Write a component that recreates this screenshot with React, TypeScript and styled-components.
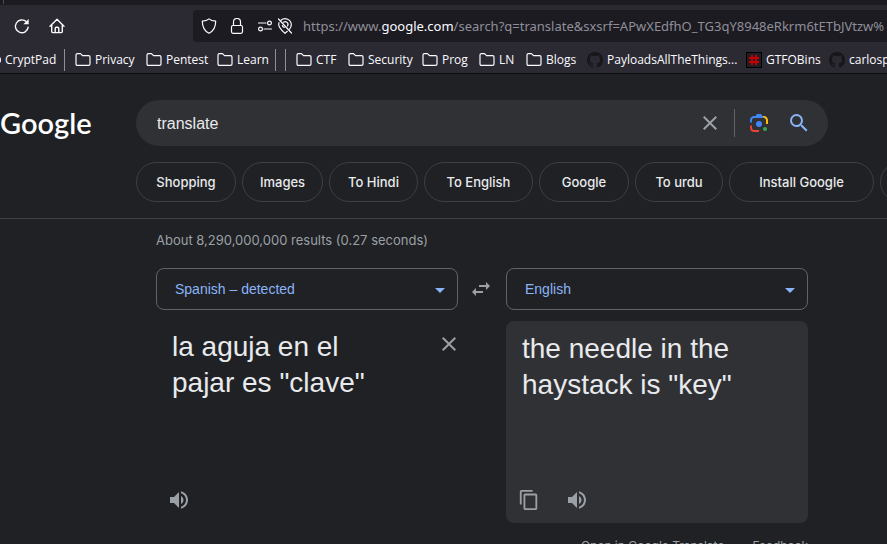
import React, { useState } from "react";
import styled, { createGlobalStyle } from "styled-components";

const GlobalStyle = createGlobalStyle`
  *, *::before, *::after { box-sizing: border-box; }
  html, body { margin: 0; height: 100%; overflow: hidden; background: #202124; }
  body { font-family: "Liberation Sans", Arial, sans-serif; color: #e8eaed; }
  #root { height: 100%; }
  button, input, select, textarea { font: inherit; color: inherit; margin: 0; }
`;

const uiFont = `"Open Sans", "Noto Sans", sans-serif`;
const brandFont = `Inter, Roboto, sans-serif`;

const Window = styled.div`
  height: 100%;
  display: flex;
  flex-direction: column;
  overflow: hidden;
`;

const TabEdge = styled.div`
  height: 5px;
  flex: none;
  background: #1c1b22;
  padding-left: 3px;
  &::before {
    content: "";
    display: block;
    width: 1px;
    height: 4px;
    background: #4a4953;
  }
`;

const Toolbar = styled.div`
  flex: none;
  height: 41px;
  display: flex;
  align-items: center;
  background: #2b2a33;
  padding: 0 0 0 12px;
`;

const IconButton = styled.button`
  flex: none;
  display: inline-flex;
  align-items: center;
  justify-content: center;
  padding: 0;
  border: 0;
  background: none;
  color: inherit;
  cursor: pointer;
  svg { display: block; }
`;

const NavButtons = styled.div`
  display: flex;
  gap: 15px;
  width: 181px;
  flex: none;
  color: #fbfbfe;
`;

const UrlBar = styled.div`
  flex: 1;
  min-width: 0;
  height: 32px;
  display: flex;
  align-items: center;
  background: #1c1b22;
  border-radius: 4px 0 0 4px;
  padding-left: 8px;
  overflow: hidden;
  color: #fbfbfe;
`;

const SiteIcons = styled.div`
  display: flex;
  align-items: center;
  flex: none;
  width: 102px;
  gap: 12px;
`;

const IconPair = styled.div`
  display: flex;
  gap: 4px;
`;

const Url = styled.div`
  font: 13px/20px "Noto Sans", sans-serif;
  white-space: nowrap;
  color: #8f8f98;
  b { font-weight: 400; color: #fbfbfe; }
`;

const Bookmarks = styled.nav`
  flex: none;
  height: 28px;
  display: flex;
  align-items: center;
  gap: 13px;
  background: #2b2a33;
  border-bottom: 1px solid #0c0c0d;
  overflow: hidden;
  font: 12px/16px ${uiFont};
  color: #fbfbfe;
`;

const Bookmark = styled.a<{ $width: number }>`
  flex: none;
  width: ${(p) => p.$width}px;
  display: flex;
  align-items: center;
  gap: 4px;
  color: inherit;
  text-decoration: none;
  white-space: nowrap;
  svg { flex: none; display: block; }
`;

const Rule = styled.span<{ $tight?: boolean }>`
  flex: none;
  width: 1px;
  height: 22px;
  background: #8f8f98;
  margin: 0 -3px 0 ${(p) => (p.$tight ? -1 : -3)}px;
`;

const Header = styled.header`
  flex: none;
  display: grid;
  grid-template-columns: 136px minmax(0, 1fr);
  padding-top: 26px;
  height: 145px;
  border-bottom: 1px solid #3c4043;
`;

const Logo = styled.a`
  height: 46px;
  font: 600 29px/46px Lato, sans-serif;
  color: #fff;
  text-decoration: none;
`;

const SearchArea = styled.div`
  min-width: 0;
  display: flex;
  flex-direction: column;
  gap: 16px;
`;

const SearchBox = styled.form`
  height: 46px;
  width: 100%;
  max-width: 692px;
  display: flex;
  align-items: center;
  background: #303134;
  border-radius: 23px;
  padding: 0 17px 0 21px;
`;

const SearchInput = styled.input`
  flex: 1;
  min-width: 0;
  height: 34px;
  padding: 2px 0 0;
  border: 0;
  outline: 0;
  background: none;
  font-size: 16px;
  color: #e8eaed;
`;

const SearchTools = styled.div`
  display: flex;
  align-items: center;
  color: #9aa0a6;
`;

const ToolDivider = styled.span`
  width: 1px;
  height: 28px;
  background: #5f6368;
  margin: 0 12px;
`;

const SubmitButton = styled(IconButton)`
  color: #8ab4f8;
  margin-left: 16px;
`;

const Chips = styled.nav`
  display: flex;
  gap: 6px;
  overflow: hidden;
`;

const Chip = styled.a<{ $width: number }>`
  flex: none;
  width: ${(p) => p.$width}px;
  height: 40px;
  display: flex;
  align-items: center;
  justify-content: center;
  border: 1px solid #3c4043;
  border-radius: 20px;
  font: 500 13px/20px ${brandFont};
  color: #e8eaed;
  text-decoration: none;
  white-space: nowrap;
`;

const Results = styled.main`
  flex: none;
  width: 100%;
  max-width: 808px;
  padding-left: 156px;
`;

const Stats = styled.div`
  padding: 11px 0 17px;
  font: 13px/21px ${brandFont};
  color: #9aa0a6;
`;

const Translator = styled.section`
  display: grid;
  grid-template-columns: minmax(0, 1fr) 48px minmax(0, 1fr);
`;

const LanguageField = styled.label`
  display: grid;
  align-items: center;
  color: #8ab4f8;
  svg {
    grid-area: 1 / 1;
    justify-self: end;
    margin: 2px 6px 0 0;
    pointer-events: none;
  }
`;

const LanguageSelect = styled.select`
  grid-area: 1 / 1;
  width: 100%;
  height: 42px;
  appearance: none;
  padding: 0 40px 0 18px;
  border: 1px solid #5f6368;
  border-radius: 8px;
  background: #202124;
  color: #8ab4f8;
  font-size: 14px;
`;

const SwapButton = styled(IconButton)`
  color: #9aa0a6;
  padding-right: 2px;
`;

const Pane = styled.div<{ $filled?: boolean }>`
  grid-column: ${(p) => (p.$filled ? 3 : 1)};
  margin-top: 11px;
  height: 202px;
  display: flex;
  flex-direction: column;
  justify-content: space-between;
  border-radius: 8px;
  padding: ${(p) => (p.$filled ? "10px 12px 11px" : "8px 0 11px 11px")};
  background: ${(p) => (p.$filled ? "#303134" : "transparent")};
  color: #9aa0a6;
`;

const SourceRow = styled.div`
  display: flex;
  align-items: flex-start;
  justify-content: space-between;
  padding-left: 5px;
`;

const SourceText = styled.textarea`
  width: 220px;
  height: 80px;
  padding: 0;
  border: 0;
  outline: 0;
  resize: none;
  overflow: hidden;
  background: none;
  color: #e8eaed;
  font-size: 28px;
  line-height: 36px;
`;

const ClearSource = styled(IconButton)`
  margin: 3px -3px 0 0;
`;

const TargetText = styled.p`
  margin: 0;
  padding-left: 4px;
  max-width: 240px;
  color: #e8eaed;
  font-size: 28px;
  line-height: 36px;
`;

const Actions = styled.div`
  display: flex;
  align-items: center;
  gap: 25px;
`;

const Footer = styled.footer`
  display: flex;
  justify-content: flex-end;
  gap: 28px;
  padding-top: 15px;
  font: 12px/16px ${brandFont};
  a { color: #9aa0a6; text-decoration: none; }
`;

const Glyph = ({ d, size = 24 }: { d: string; size?: number }) => (
  <svg width={size} height={size} viewBox="0 0 24 24" fill="currentColor" aria-hidden="true">
    <path d={d} />
  </svg>
);

const CLOSE = "M19 6.41L17.59 5 12 10.59 6.41 5 5 6.41 10.59 12 5 17.59 6.41 19 12 13.41 17.59 19 19 17.59 13.41 12z";
const SEARCH = "M15.5 14h-.79l-.28-.27A6.471 6.471 0 0 0 16 9.5 6.5 6.5 0 1 0 9.5 16c1.61 0 3.09-.59 4.23-1.57l.27.28v.79l5 4.99L20.49 19l-4.99-5zm-6 0C7.01 14 5 11.99 5 9.5S7.01 5 9.5 5 14 7.01 14 9.5 11.99 14 9.5 14z";
const SPEAKER = "M3 9v6h4l5 5V4L7 9H3zm13.5 3c0-1.77-1.02-3.29-2.5-4.03v8.05c1.48-.73 2.5-2.25 2.5-4.02zM14 3.23v2.06c2.89.86 5 3.54 5 6.71s-2.11 5.85-5 6.71v2.06c4.01-.91 7-4.49 7-8.77s-2.99-7.86-7-8.77z";
const COPY = "M16 1H4c-1.1 0-2 .9-2 2v14h2V3h12V1zm3 4H8c-1.1 0-2 .9-2 2v14c0 1.1.9 2 2 2h11c1.1 0 2-.9 2-2V7c0-1.1-.9-2-2-2zm0 16H8V7h11v14z";
const SWAP = "M6.99 11L3 15l3.99 4v-3H14v-2H6.99v-3zM21 9l-3.99-4v3H10v2h7.01v3L21 9z";
const CARET = "M7 10l5 5 5-5z";

const Line = ({ children, width = 16 }: { children: React.ReactNode; width?: number }) => (
  <svg width={width} height="16" viewBox={`0 0 ${width} 16`} fill="none" stroke="currentColor" strokeWidth="1.2" strokeLinecap="round" strokeLinejoin="round" aria-hidden="true">
    {children}
  </svg>
);

const ReloadIcon = () => (
  <svg width="20" height="20" viewBox="0 0 20 20" fill="none" stroke="currentColor" strokeWidth="1.4" strokeLinecap="round" aria-hidden="true">
    <path d="M16.2 11.2A6.4 6.4 0 1 1 14.2 5.6" />
    <path d="M16.7 3v5.3h-5.3z" fill="currentColor" stroke="none" />
  </svg>
);

const HomeIcon = () => (
  <svg width="20" height="20" viewBox="0 0 20 20" fill="none" stroke="currentColor" strokeWidth="1.4" strokeLinecap="round" strokeLinejoin="round" aria-hidden="true">
    <path d="M3 10.2 10 3.2l7 7M4.7 9v6.6c0 .6.4 1 1 1h8.600c.6 0 1-.4 1-1V9M8.200 16.500v-4c0-.8.6-1.300 1.300-1.300h1c.7 0 1.300.5 1.300 1.300v4" />
  </svg>
);

const ShieldIcon = () => (
  <Line><path d="M8 .9C9.500 2.200 12 3 14.700 3.200c0 5.600-1.700 9.600-6.700 12C3 12.800 1.300 8.800 1.300 3.200 4 3 6.500 2.200 8 .9z" /></Line>
);

const LockIcon = () => (
  <Line>
    <rect x="2.500" y="7.500" width="11" height="7.800" rx="1.500" />
    <path d="M4.500 7.200V4a3.500 3.500 0 0 1 7 0v3.200" />
  </Line>
);

const PermissionsIcon = () => (
  <Line>
    <path d="M1.500 5h7.500M7 11h7.500" />
    <circle cx="12.500" cy="5" r="1.900" />
    <circle cx="3.500" cy="11" r="1.900" />
  </Line>
);

const LocationOffIcon = () => (
  <Line>
    <path d="M4 2.300a6.200 6.200 0 0 1 10.300 4.500c0 1.700-.7 3.100-1.800 4.300M10.300 13.300 8 15.300C5 12.600 1.700 10 1.700 6.500c0-.7.1-1.300.3-1.900" />
    <path d="M6.500 4.200a2.800 2.800 0 0 1 4 3.800M5.400 7.500c.2.900.9 1.700 1.900 1.900M1.500 1l13 14" />
  </Line>
);

const FolderIcon = () => (
  <Line>
    <path d="M1 12V3c0-.8.6-1.400 1.400-1.400h3.100l2 2h6.100c.8 0 1.400.6 1.400 1.400v7c0 .8-.6 1.400-1.400 1.400H2.400C1.600 13.400 1 12.800 1 12z" />
  </Line>
);

const GitHubIcon = () => (
  <svg width="16" height="16" viewBox="0 0 16 16" fill="#17161a" aria-hidden="true">
    <path d="M8 0C3.580 0 0 3.580 0 8c0 3.540 2.290 6.530 5.470 7.590.4.070.55-.17.55-.38 0-.19-.01-.82-.01-1.490-2.010.37-2.530-.49-2.690-.94-.09-.23-.48-.94-.82-1.130-.28-.15-.68-.52-.01-.53.63-.01 1.080.58 1.230.82.72 1.210 1.870.87 2.330.66.070-.52.28-.87.51-1.070-1.780-.2-3.640-.89-3.640-3.950 0-.87.31-1.590.82-2.150-.08-.2-.36-1.020.08-2.120 0 0 .67-.21 2.200.82.64-.18 1.320-.27 2-.27s1.360.09 2 .27c1.530-1.040 2.200-.82 2.200-.82.44 1.100.16 1.920.08 2.120.51.56.82 1.270.82 2.150 0 3.070-1.870 3.750-3.650 3.950.29.25.54.73.54 1.480 0 1.070-.01 1.930-.01 2.200 0 .21.15.46.55.38A8.010 8.010 0 0 0 16 8c0-4.420-3.580-8-8-8z" />
  </svg>
);

const HashIcon = () => (
  <svg width="16" height="16" viewBox="0 0 16 16" aria-hidden="true">
    <rect x=".5" y=".5" width="15" height="15" fill="#1f1e25" stroke="#000" />
    <path d="M6 3v10M10 3v10M3 6h10M3 10h10" stroke="#c80000" strokeWidth="1.800" />
  </svg>
);

const DotIcon = () => (
  <svg width="1" height="16" viewBox="0 0 1 16" aria-hidden="true">
    <circle cx="-3" cy="8" r="4" fill="#fbfbfe" />
  </svg>
);

const LensIcon = () => (
  <svg width="24" height="24" viewBox="0 0 192 192" aria-hidden="true">
    <circle fill="#34a853" cx="144" cy="144" r="16" />
    <circle fill="#4285f4" cx="96" cy="104" r="24" />
    <path fill="#ea4335" d="M24 135.200C24 153.300 38.700 168 56.800 168H96v-16l-40.100-.1c-8.800 0-15.900-8.200-15.900-17.900v-18H24z" />
    <path fill="#fbbc04" d="M168 72.800C168 54.700 153.300 40 135.200 40H116l20 16c8.800 0 16 8.300 16 18v30h16z" />
    <path fill="#4285f4" d="M112 24H80L68 40H56.800C38.700 40 24 54.700 24 72.800V92h16V74c0-9.700 7.200-18 16-18h80l-12-16z" />
  </svg>
);

const bookmarksLeft = [
  { label: "Privacy", width: 58 },
  { label: "Pentest", width: 58 },
  { label: "Learn", width: 48 },
];
const bookmarksRight = [
  { label: "CTF", width: 39 },
  { label: "Security", width: 61 },
  { label: "Prog", width: 44 },
  { label: "LN", width: 34 },
  { label: "Blogs", width: 48 },
  { label: "PayloadsAllTheThings...", width: 146, icon: <GitHubIcon /> },
  { label: "GTFOBins", width: 70, icon: <HashIcon /> },
  { label: "carlosp", width: 80, icon: <GitHubIcon /> },
];

const chips = [
  { label: "Shopping", width: 100 },
  { label: "Images", width: 81 },
  { label: "To Hindi", width: 89 },
  { label: "To English", width: 109 },
  { label: "Google", width: 90 },
  { label: "To urdu", width: 88 },
  { label: "Install Google", width: 145 },
  { label: "", width: 100 },
];

export default function App() {
  const [query, setQuery] = useState("translate");
  const [source, setSource] = useState('la aguja en el\npajar es "clave"');

  return (
    <Window>
      <GlobalStyle />
      <TabEdge />
      <Toolbar>
        <NavButtons>
          <IconButton aria-label="Reload"><ReloadIcon /></IconButton>
          <IconButton aria-label="Home"><HomeIcon /></IconButton>
        </NavButtons>
        <UrlBar>
          <SiteIcons>
            <IconButton aria-label="Tracking protection"><ShieldIcon /></IconButton>
            <IconButton aria-label="Connection secure"><LockIcon /></IconButton>
            <IconPair>
              <IconButton aria-label="Permissions"><PermissionsIcon /></IconButton>
              <IconButton aria-label="Location blocked"><LocationOffIcon /></IconButton>
            </IconPair>
          </SiteIcons>
          <Url>
            https://www.<b>google.com</b>/search?q=translate&amp;sxsrf=APwXEdfhO_TG3qY8948eRkrm6tETbJVtzw%
          </Url>
        </UrlBar>
      </Toolbar>
      <Bookmarks aria-label="Bookmarks">
        <Bookmark href="#" $width={54}><DotIcon />CryptPad</Bookmark>
        <Rule />
        {bookmarksLeft.map((b) => (
          <Bookmark key={b.label} href="#" $width={b.width}><FolderIcon />{b.label}</Bookmark>
        ))}
        <Rule />
        <Rule $tight />
        {bookmarksRight.map((b) => (
          <Bookmark key={b.label} href="#" $width={b.width}>{b.icon ?? <FolderIcon />}{b.label}</Bookmark>
        ))}
      </Bookmarks>

      <Header>
        <Logo href="#">Google</Logo>
        <SearchArea>
          <SearchBox role="search" onSubmit={(e) => e.preventDefault()}>
            <SearchInput aria-label="Search" value={query} onChange={(e) => setQuery(e.target.value)} />
            <SearchTools>
              <IconButton type="button" aria-label="Clear" onClick={() => setQuery("")}><Glyph d={CLOSE} /></IconButton>
              <ToolDivider />
              <IconButton type="button" aria-label="Search by image"><LensIcon /></IconButton>
              <SubmitButton type="submit" aria-label="Search"><Glyph d={SEARCH} /></SubmitButton>
            </SearchTools>
          </SearchBox>
          <Chips aria-label="Related searches">
            {chips.map((c) => (
              <Chip key={c.label} href="#" $width={c.width}>{c.label}</Chip>
            ))}
          </Chips>
        </SearchArea>
      </Header>

      <Results>
        <Stats>About 8,290,000,000 results (0.27 seconds)</Stats>
        <Translator>
          <LanguageField>
            <LanguageSelect aria-label="Source language"><option>Spanish – detected</option></LanguageSelect>
            <Glyph d={CARET} />
          </LanguageField>
          <SwapButton aria-label="Swap languages"><Glyph d={SWAP} /></SwapButton>
          <LanguageField>
            <LanguageSelect aria-label="Target language"><option>English</option></LanguageSelect>
            <Glyph d={CARET} />
          </LanguageField>
          <Pane>
            <SourceRow>
              <SourceText aria-label="Source text" spellCheck={false} value={source} onChange={(e) => setSource(e.target.value)} />
              <ClearSource aria-label="Clear text" onClick={() => setSource("")}><Glyph d={CLOSE} /></ClearSource>
            </SourceRow>
            <Actions>
              <IconButton aria-label="Listen"><Glyph d={SPEAKER} /></IconButton>
            </Actions>
          </Pane>
          <Pane $filled>
            <TargetText>the needle in the haystack is "key"</TargetText>
            <Actions>
              <IconButton aria-label="Copy"><Glyph d={COPY} size={22} /></IconButton>
              <IconButton aria-label="Listen"><Glyph d={SPEAKER} /></IconButton>
            </Actions>
          </Pane>
        </Translator>
        <Footer>
          <a href="#">Open in Google Translate</a>
          <a href="#">Feedback</a>
        </Footer>
      </Results>
    </Window>
  );
}
